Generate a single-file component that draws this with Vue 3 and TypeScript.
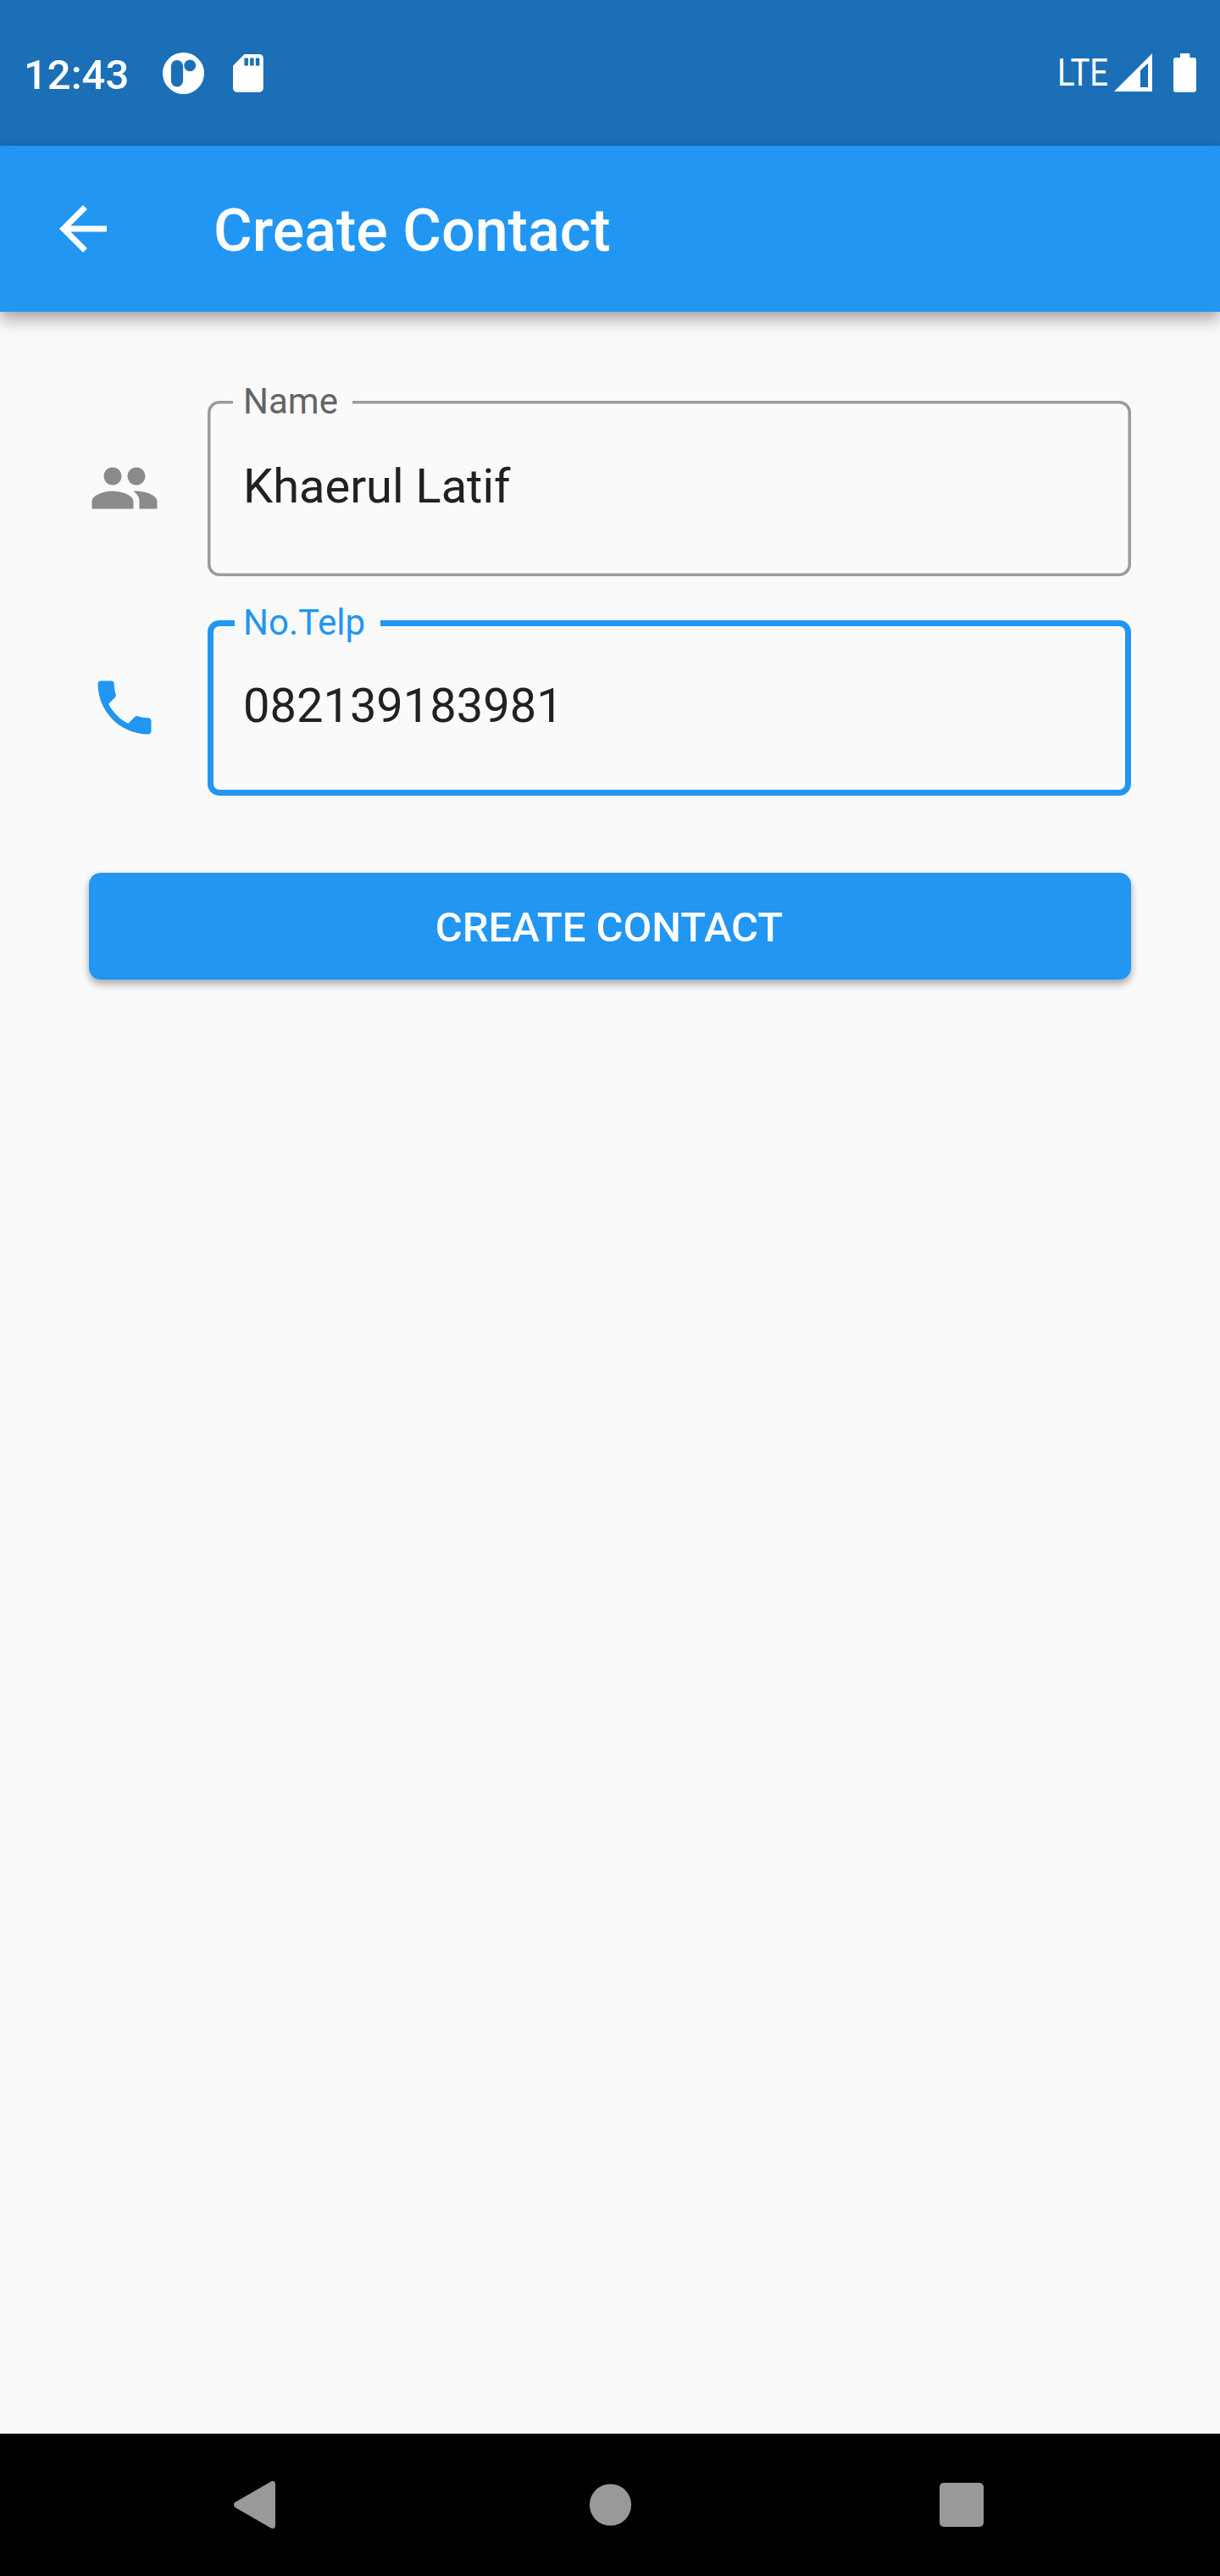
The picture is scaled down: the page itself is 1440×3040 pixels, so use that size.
<script setup lang="ts">
import { ref } from 'vue'

interface Field {
  label: string
  value: string
  icon: string
  focused: boolean
}

const fields = ref<Field[]>([
  {
    label: 'Name',
    value: 'Khaerul Latif',
    icon: 'M16 11c1.66 0 2.99-1.34 2.99-3S17.66 5 16 5c-1.66 0-3 1.34-3 3s1.34 3 3 3zm-8 0c1.66 0 2.99-1.34 2.99-3S9.66 5 8 5C6.34 5 5 6.34 5 8s1.34 3 3 3zm0 2c-2.33 0-7 1.17-7 3.5V19h14v-2.5c0-2.33-4.67-3.5-7-3.5zm8 0c-.29 0-.62.02-.97.05 1.16.84 1.97 1.97 1.97 3.45V19h6v-2.5c0-2.33-4.67-3.5-7-3.5z',
    focused: false,
  },
  {
    label: 'No.Telp',
    value: '082139183981',
    icon: 'M6.62 10.79c1.44 2.83 3.76 5.14 6.59 6.59l2.2-2.2c.27-.27.67-.36 1.02-.24 1.12.37 2.33.57 3.57.57.55 0 1 .45 1 1V20c0 .55-.45 1-1 1-9.39 0-17-7.61-17-17 0-.55.45-1 1-1h3.5c.55 0 1 .45 1 1 0 1.25.2 2.45.57 3.57.11.35.03.74-.25 1.02l-2.2 2.2z',
    focused: true,
  },
])
</script>

<template>
  <div class="screen">
    <header class="status">
      <span class="clock">12:43</span>
      <svg class="app-icon" viewBox="0 0 49 49">
        <path
          fill-rule="evenodd"
          d="M24.5 0a24.5 24.5 0 1 0 0 49a24.5 24.5 0 1 0 0-49z M17 9a7.1 7.1 0 0 1 7.1 7.1v17.3a7.1 7.1 0 0 1-14.2 0V16.1a7.1 7.1 0 0 1 7.1-7.1z M32.2 8.5a6.9 6.9 0 1 1 0 13.8a6.9 6.9 0 1 1 0-13.8z"
        />
      </svg>
      <svg class="sd" viewBox="4 2 16 20">
        <path d="M18 2h-8L4.02 8 4 20c0 1.1.9 2 2 2h12c1.1 0 2-.9 2-2V4c0-1.1-.9-2-2-2zm-6 6h-2V4h2v4zm3 0h-2V4h2v4zm3 0h-2V4h2v4z" />
      </svg>
      <span class="spacer"></span>
      <span class="lte"><span class="lte-text">LTE</span></span>
      <svg class="signal" viewBox="0 0 45 45">
        <path fill-rule="evenodd" d="M0 45L45 0V45z M31 20.3V40H40V11.4z" />
      </svg>
      <svg class="battery" viewBox="0 0 27 46">
        <path d="M8 0H19.3V5H24a3 3 0 0 1 3 3V42.7a3 3 0 0 1-3 3H3a3 3 0 0 1-3-3V8a3 3 0 0 1 3-3H8z" />
      </svg>
    </header>

    <div class="appbar">
      <svg class="back" viewBox="0 0 24 24">
        <path d="M20 11H7.83l5.59-5.59L12 4l-8 8 8 8 1.41-1.41L7.83 13H20v-2z" />
      </svg>
      <h1>Create Contact</h1>
    </div>

    <main>
      <div v-for="f in fields" :key="f.label" class="row" :class="{ focused: f.focused }">
        <svg class="lead" viewBox="0 0 24 24"><path :d="f.icon" /></svg>
        <div class="field">
          <span class="label">{{ f.label }}</span>
          <span class="value">{{ f.value }}</span>
        </div>
      </div>
      <button class="submit" type="button">CREATE CONTACT</button>
    </main>

    <nav>
      <svg viewBox="0 0 60 60">
        <path d="M7 27.3L49.5 2.8Q51 1.8 52.5 2Q55 2.6 55 6V54Q55 57.4 52.5 58Q51 58.2 49.5 57.2L7 32.7Q5 30 7 27.3z" />
      </svg>
      <svg viewBox="0 0 60 60"><circle cx="32.5" cy="30" r="24.6" /></svg>
      <svg viewBox="0 0 60 60"><rect x="4" y="4" width="52" height="52" rx="5" /></svg>
    </nav>
  </div>
</template>

<style>
body {
  margin: 0;
}
</style>

<style scoped>
.screen {
  display: flex;
  flex-direction: column;
  width: 1440px;
  height: 3040px;
  background: #fafafa;
  font-family: Roboto, 'Noto Sans', sans-serif;
  overflow: hidden;
}
svg {
  display: block;
  flex: none;
}
.status {
  display: flex;
  align-items: flex-start;
  height: 172px;
  flex: none;
  box-sizing: border-box;
  padding: 62px 28px 0;
  background: #1a6fb6;
  color: #fff;
  fill: #fff;
}
.clock {
  width: 164px;
  font-size: 49px;
  font-weight: 500;
  line-height: 54px;
}
.app-icon {
  width: 49px;
  height: 49px;
}
.sd {
  width: 35.8px;
  height: 44.7px;
  margin: 2px 0 0 34.3px;
}
.spacer {
  flex: 1;
}
.lte {
  width: 67px;
  font-size: 44px;
  line-height: 48px;
}
.lte-text {
  display: inline-block;
  transform: scaleX(0.87);
  transform-origin: 0 50%;
}
.signal {
  width: 45px;
  height: 45px;
  margin: 1px 25px 0 0;
}
.battery {
  width: 27px;
  height: 46px;
  margin-top: 1px;
}
.appbar {
  display: flex;
  align-items: center;
  height: 196px;
  flex: none;
  padding-left: 56px;
  background: #2196f3;
  box-shadow: 0 10px 18px rgba(0, 0, 0, 0.3), 0 2px 10px rgba(0, 0, 0, 0.06);
}
.back {
  width: 84px;
  height: 84px;
  margin-right: 112px;
  fill: #fff;
}
h1 {
  margin: 0;
  padding-top: 4px;
  color: #fff;
  font-size: 70px;
  font-weight: 500;
  line-height: 82px;
}
main {
  flex: 1;
  display: flex;
  flex-direction: column;
  padding: 105px 105px 0;
}
.row {
  display: flex;
  align-items: center;
  height: 206.5px;
  margin-bottom: 52.5px;
}
.lead {
  width: 84px;
  height: 84px;
  margin-right: 56px;
  fill: #8a8a8a;
}
.field {
  position: relative;
  flex: 1;
  height: 100%;
  box-sizing: border-box;
  padding: 68px 0 0 42px;
  display: flex;
  align-items: flex-start;
}
.field::before {
  content: '';
  position: absolute;
  inset: 0;
  border-radius: 14px;
  box-shadow: inset 0 0 0 3.5px #9b9b9b;
}
.label {
  position: absolute;
  top: -24px;
  left: 29.5px;
  padding: 0 17px 0 12.5px;
  background: #fafafa;
  color: #646464;
  font-size: 42px;
  line-height: 50px;
}
.value {
  position: relative;
  color: #212121;
  font-size: 56px;
  line-height: 66px;
}
.focused .lead {
  fill: #2196f3;
}
.focused .field::before {
  box-shadow: inset 0 0 0 7px #2196f3;
}
.focused .label {
  top: -22px;
  left: 31.5px;
  padding: 0 18px 0 10.5px;
  color: #2196f3;
}
.submit {
  height: 126px;
  margin-top: 39px;
  padding: 3px 2px 0 0;
  border: 0;
  border-radius: 14px;
  background: #2196f3;
  color: #fff;
  font: 500 49px/58px Roboto, 'Noto Sans', sans-serif;
  box-shadow: 0 6px 10px rgba(0, 0, 0, 0.28), 0 1px 8px rgba(0, 0, 0, 0.08);
}
nav {
  flex: none;
  height: 168px;
  box-sizing: border-box;
  padding: 0 275px 0 270px;
  display: flex;
  align-items: center;
  justify-content: space-between;
  background: #000;
  fill: #999;
}
nav svg {
  width: 60px;
  height: 60px;
}
</style>
